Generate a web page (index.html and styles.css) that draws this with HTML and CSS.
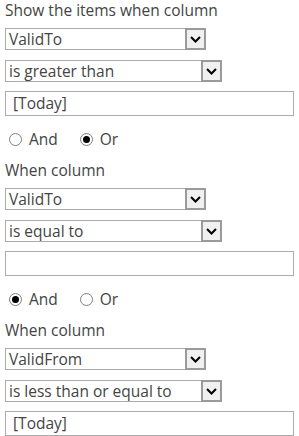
FILE: index.html
```html
<!DOCTYPE html>
<html>
<head>
  <title>Filter</title>
  <link rel="stylesheet" href="styles.css">
</head>
<body>
  <div class="filter">
    <div class="label">Show the items when column</div>
    <div class="select field-name">
      <span class="select-text">ValidTo</span>
      <span class="select-btn"><svg width="11" height="7" viewBox="0 0 11 7"><path d="M1 1 L5.5 5.5 L10 1" fill="none" stroke="#000" stroke-width="2"/></svg></span>
    </div>
    <div class="select field-op">
      <span class="select-text">is greater than</span>
      <span class="select-btn"><svg width="11" height="7" viewBox="0 0 11 7"><path d="M1 1 L5.5 5.5 L10 1" fill="none" stroke="#000" stroke-width="2"/></svg></span>
    </div>
    <div class="input"> [Today]</div>
    <div class="radios">
      <label class="radio"><span class="dot"></span>And</label>
      <label class="radio"><span class="dot checked"></span>Or</label>
    </div>

    <div class="label">When column</div>
    <div class="select field-name">
      <span class="select-text">ValidTo</span>
      <span class="select-btn"><svg width="11" height="7" viewBox="0 0 11 7"><path d="M1 1 L5.5 5.5 L10 1" fill="none" stroke="#000" stroke-width="2"/></svg></span>
    </div>
    <div class="select field-op">
      <span class="select-text">is equal to</span>
      <span class="select-btn"><svg width="11" height="7" viewBox="0 0 11 7"><path d="M1 1 L5.5 5.5 L10 1" fill="none" stroke="#000" stroke-width="2"/></svg></span>
    </div>
    <div class="input"></div>
    <div class="radios">
      <label class="radio"><span class="dot checked"></span>And</label>
      <label class="radio"><span class="dot"></span>Or</label>
    </div>

    <div class="label">When column</div>
    <div class="select field-name">
      <span class="select-text">ValidFrom</span>
      <span class="select-btn"><svg width="11" height="7" viewBox="0 0 11 7"><path d="M1 1 L5.5 5.5 L10 1" fill="none" stroke="#000" stroke-width="2"/></svg></span>
    </div>
    <div class="select field-op">
      <span class="select-text">is less than or equal to</span>
      <span class="select-btn"><svg width="11" height="7" viewBox="0 0 11 7"><path d="M1 1 L5.5 5.5 L10 1" fill="none" stroke="#000" stroke-width="2"/></svg></span>
    </div>
    <div class="input"> [Today]</div>
  </div>
</body>
</html>
```

FILE: styles.css
```css
body {
  margin: 0;
  background: #fff;
  font-family: "Open Sans", "Noto Sans", sans-serif;
  font-size: 15.5px;
  color: #444;
}
.filter {
  padding: 0 5px;
  display: flex;
  flex-direction: column;
  align-items: flex-start;
}
.label {
  height: 20px;
  line-height: 20px;
  margin-bottom: 8px;
}
.select {
  display: flex;
  height: 22px;
  box-sizing: border-box;
  border: 1px solid #ababab;
  background: #fff;
  margin-bottom: 10px;
}
.select.field-op {
  margin-bottom: 9px;
}
.field-name {
  width: 201px;
}
.field-op {
  width: 217px;
}
.select-text {
  flex: 1;
  padding-left: 3px;
  line-height: 20px;
  white-space: nowrap;
  overflow: hidden;
}
.select-btn {
  width: 21px;
  height: 22px;
  margin: -1px -1px 0 0;
  box-sizing: border-box;
  border: 2px solid #9a9a9a;
  background: #f0f0f0;
  display: flex;
  align-items: center;
  justify-content: center;
}
.input {
  width: 289px;
  height: 25px;
  box-sizing: border-box;
  border: 1px solid #ababab;
  padding-left: 3px;
  line-height: 23px;
  white-space: pre;
}
.radios {
  display: flex;
  gap: 22px;
  height: 20px;
  margin: 13px 0 11px 4px;
  line-height: 20px;
}
.radio {
  display: flex;
  align-items: center;
  gap: 7px;
}
.dot {
  width: 13px;
  height: 13px;
  box-sizing: border-box;
  border: 1px solid #808080;
  border-radius: 50%;
  display: flex;
  align-items: center;
  justify-content: center;
}
.dot.checked::after {
  content: "";
  width: 7px;
  height: 7px;
  border-radius: 50%;
  background: #000;
}
```
